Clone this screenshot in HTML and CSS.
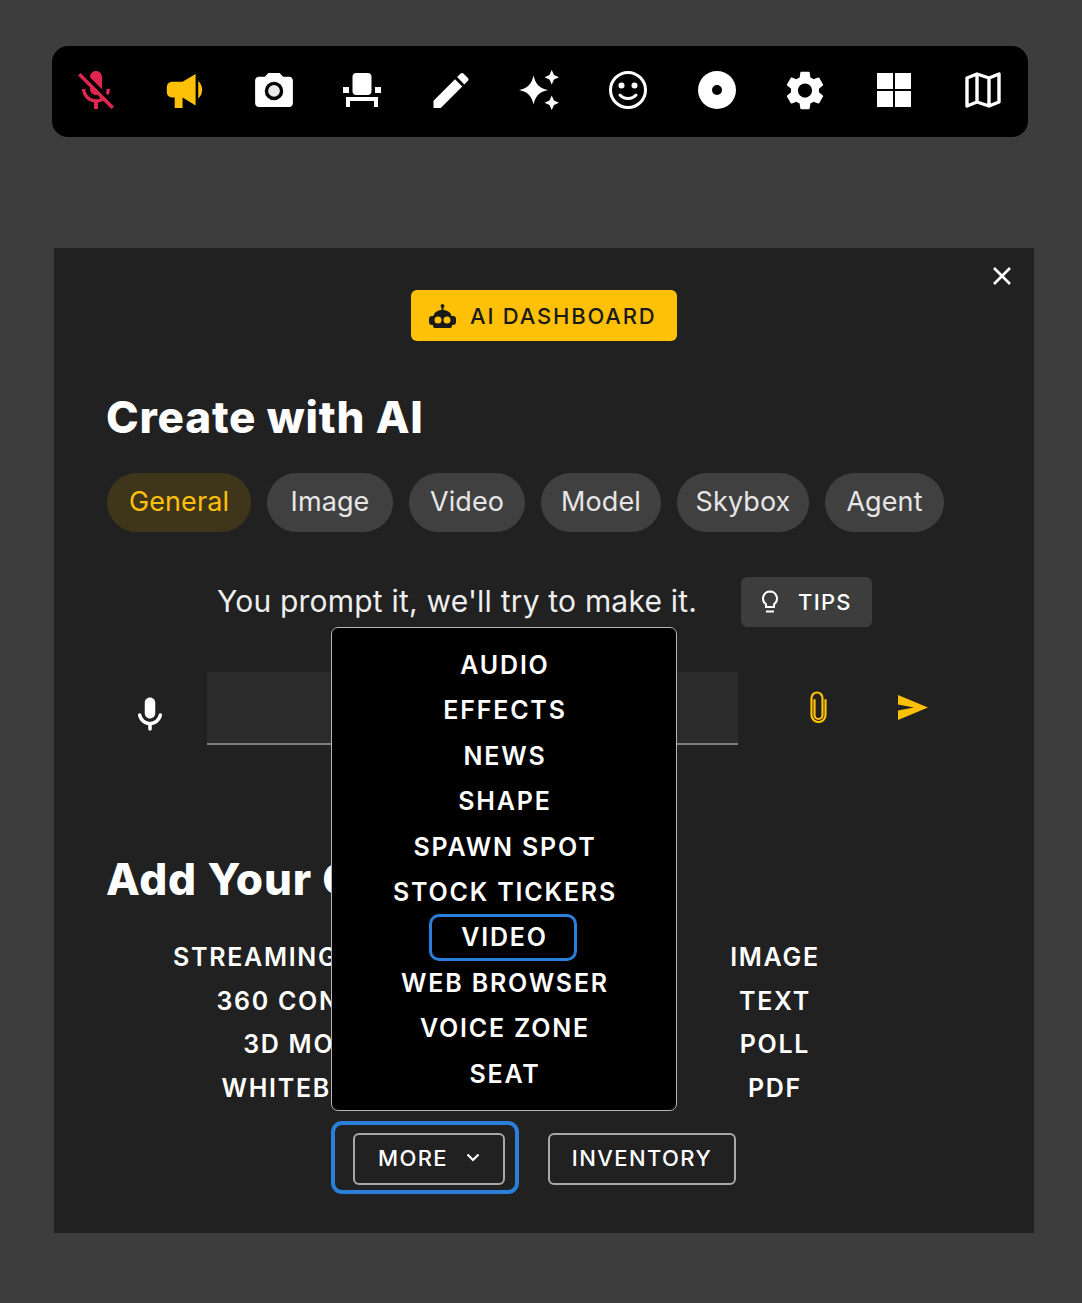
FILE: index.html
```html
<!DOCTYPE html>
<html lang="en">
<head>
<meta charset="utf-8">
<title>Create with AI</title>
<link rel="stylesheet" href="styles.css">
</head>
<body>
<nav class="toolbar">
  <button class="tool"><svg class="ic-mic-off" viewBox="3 2 18 19"><path fill="#e0264f" d="M19 11h-1.7c0 .74-.16 1.43-.43 2.05l1.23 1.23c.56-.98.9-2.09.9-3.28zm-4.02.17c0-.06.02-.11.02-.17V5c0-1.66-1.34-3-3-3S9 3.34 9 5v.18l5.98 5.99zM4.27 3L3 4.27l6.01 6.01V11c0 1.66 1.33 3 2.99 3 .22 0 .44-.03.65-.08l1.66 1.66c-.71.33-1.5.52-2.31.52-2.76 0-5.3-2.1-5.3-5.1H5c0 3.41 2.72 6.23 6 6.72V21h2v-3.28c.91-.13 1.77-.45 2.54-.9L19.73 21 21 19.73 4.27 3z"/></svg></button>
  <button class="tool"><svg class="ic-horn" viewBox="2 6 13.5 13"><path fill="#ffc107" d="M4 9c-1.1 0-2 .9-2 2v2c0 1.1.9 2 2 2h1v4h3v-4l5 3V6L8 9H4zm11.5 3c0-1.33-.58-2.53-1.5-3.35v6.69c.92-.81 1.5-2.01 1.5-3.34z"/></svg></button>
  <button class="tool"><svg class="ic-camera" viewBox="2 2 20 18"><path fill="#fff" d="M20 4h-3.17L15 2H9L7.17 4H4c-1.1 0-2 .9-2 2v12c0 1.1.9 2 2 2h16c1.1 0 2-.9 2-2V6c0-1.1-.9-2-2-2z"/><circle cx="12" cy="11.5" r="4.9" fill="#000"/><circle cx="12" cy="11.5" r="3.1" fill="#e8e8e8"/></svg></button>
  <button class="tool"><svg class="ic-chair" viewBox="0 0 38 34"><g fill="#fff"><rect x="9.500" y="0" width="19" height="22" rx="4"/><rect x="0" y="14" width="6" height="6"/><rect x="32" y="14" width="6" height="6"/><path d="M3 24h32v10h-4v-6H7v6H3z"/></g></svg></button>
  <button class="tool"><svg class="ic-pencil" viewBox="3 3 18 18"><path fill="#fff" d="M3 17.25V21h3.75L17.81 9.94l-3.75-3.75L3 17.25zM20.71 7.04c.39-.39.39-1.02 0-1.41l-2.34-2.34c-.39-.39-1.02-.39-1.41 0l-1.83 1.83 3.75 3.75 1.83-1.83z"/></svg></button>
  <button class="tool"><svg class="ic-spark" viewBox="1 1 22 22"><path fill="#fff" d="M19 9l1.25-2.75L23 5l-2.75-1.25L19 1l-1.25 2.75L15 5l2.75 1.25L19 9zm-10-5c.9 3.9 2.6 6.9 8 8-5.400 1.100-7.100 4.100-8 8-.9-3.900-2.600-6.900-8-8 5.400-1.100 7.100-4.100 8-8zM19 15l-1.250 2.750L15 19l2.750 1.250L19 23l1.250-2.750L23 19l-2.750-1.250L19 15z"/></svg></button>
  <button class="tool"><svg class="ic-smile" viewBox="0 0 38 38"><circle cx="19" cy="19" r="17.500" fill="none" stroke="#fff" stroke-width="3"/><circle cx="12.500" cy="14.500" r="3" fill="#fff"/><circle cx="25.500" cy="14.500" r="3" fill="#fff"/><path d="M11 24c4 4.500 12 4.500 16 0" fill="none" stroke="#fff" stroke-width="3" stroke-linecap="round"/></svg></button>
  <button class="tool"><svg class="ic-disc" viewBox="0 0 38 38"><circle cx="19" cy="19" r="19" fill="#fff"/><circle cx="19" cy="19" r="5" fill="#000"/></svg></button>
  <button class="tool"><svg class="ic-gear" viewBox="2.600 2 18.800 20"><path fill="#fff" d="M19.140 12.940c.04-.3.06-.61.06-.94 0-.32-.02-.64-.07-.94l2.030-1.580c.18-.14.23-.41.12-.61l-1.920-3.320c-.12-.22-.37-.29-.59-.22l-2.390.96c-.5-.38-1.030-.7-1.620-.94l-.36-2.540c-.04-.24-.24-.41-.48-.41h-3.840c-.24 0-.43.17-.47.41l-.36 2.540c-.59.24-1.130.57-1.620.94l-2.390-.96c-.22-.08-.47 0-.59.22L2.740 8.870c-.12.21-.08.47.12.61l2.030 1.580c-.05.3-.09.63-.09.94s.02.64.07.94l-2.030 1.580c-.18.14-.23.41-.12.61l1.920 3.320c.12.22.37.29.59.22l2.390-.96c.5.38 1.030.7 1.620.94l.36 2.540c.05.24.24.41.48.41h3.840c.24 0 .44-.17.47-.41l.36-2.540c.59-.24 1.130-.56 1.620-.94l2.390.96c.22.08.47 0 .59-.22l1.920-3.320c.12-.22.07-.47-.12-.61l-2.010-1.580zM12 15.600c-1.980 0-3.600-1.620-3.600-3.600s1.620-3.600 3.600-3.600 3.600 1.620 3.600 3.600-1.620 3.600-3.600 3.600z"/></svg></button>
  <button class="tool"><svg class="ic-grid" viewBox="0 0 34 34"><g fill="#fff"><rect width="16" height="16"/><rect x="18" width="16" height="16"/><rect y="18" width="16" height="16"/><rect x="18" y="18" width="16" height="16"/></g></svg></button>
  <button class="tool"><svg class="ic-map" viewBox="0 0 36 36"><path d="M2 6l10-4 12 4 10-4v28l-10 4-12-4-10 4zM12 2v28M24 6v28" fill="none" stroke="#fff" stroke-width="3.400" stroke-linejoin="round"/></svg></button>
</nav>

<main class="panel">
  <button class="close" aria-label="Close"><svg viewBox="0 0 20 20"><path d="M2 2l16 16M18 2L2 18" stroke="#fff" stroke-width="2.600"/></svg></button>

  <div class="dash-wrap">
    <button class="dash">
      <svg class="ic-robot" viewBox="0 0 27 24"><path fill="#1a1a1a" fill-rule="evenodd" d="M13.500 0a2 2 0 0 1 1 3.700V6c4.500.3 7.500 3 8 6h1.500a3 3 0 0 1 3 3v3a3 3 0 0 1-3 3h-1v1a2 2 0 0 1-2 2H6a2 2 0 0 1-2-2v-1H3a3 3 0 0 1-3-3v-3a3 3 0 0 1 3-3h1.500c.5-3 3.500-5.700 8-6V3.700a2 2 0 0 1 1-3.700zM9 12.500a3.500 3.500 0 1 0 0 7 3.500 3.500 0 0 0 0-7zm9 0a3.500 3.500 0 1 0 0 7 3.500 3.500 0 0 0 0-7z"/></svg>
      <span>AI DASHBOARD</span>
    </button>
  </div>

  <h1 class="heading h-create">Create with AI</h1>

  <div class="tabs">
    <span class="tab tab-on t1">General</span>
    <span class="tab t2">Image</span>
    <span class="tab t3">Video</span>
    <span class="tab t4">Model</span>
    <span class="tab t5">Skybox</span>
    <span class="tab t6">Agent</span>
  </div>

  <div class="prompt">
    <p class="prompt-text">You prompt it, we'll try to make it.</p>
    <button class="tips">
      <svg class="ic-bulb" viewBox="0 0 18 24"><path d="M9 1.500a7 7 0 0 0-4 12.700V17h8v-2.800A7 7 0 0 0 9 1.500z" fill="none" stroke="#fff" stroke-width="2"/><path d="M5 21.500h8" stroke="#fff" stroke-width="2"/></svg>
      <span>TIPS</span>
    </button>
  </div>

  <div class="input-row">
    <svg class="ic-mic" viewBox="4 2 16 19"><path fill="#fff" d="M12 14c1.660 0 3-1.340 3-3V5c0-1.660-1.340-3-3-3S9 3.340 9 5v6c0 1.660 1.340 3 3 3zM17.910 11c-.49 0-.9.36-.98.85C16.520 14.200 14.470 16 12 16s-4.520-1.800-4.930-4.150c-.08-.49-.49-.85-.98-.85-.61 0-1.090.54-1 1.140.49 3 2.890 5.350 5.910 5.780V20c0 .55.45 1 1 1s1-.45 1-1v-2.080c3.020-.43 5.420-2.780 5.910-5.780.1-.6-.39-1.140-1-1.140z"/></svg>
    <div class="field"></div>
    <svg class="ic-clip" viewBox="0 0 19 32"><path d="M5.500 9v15a4 4 0 0 0 8 0V7a5.500 5.500 0 0 0-11 0v17a7 7 0 0 0 14 0V9" fill="none" stroke="#ffc107" stroke-width="2.200" stroke-linecap="round"/></svg>
    <svg class="ic-send" viewBox="0 0 30 25"><path fill="#ffc107" d="M0 0l30 12.500L0 25v-9.500l16-3-16-3z"/></svg>
  </div>

  <h2 class="heading h-add">Add Your Content</h2>

  <div class="content-grid">
    <span>STREAMING SCREEN</span><span>IMAGE</span>
    <span>360 CONTENT</span><span>TEXT</span>
    <span>3D MODEL</span><span>POLL</span>
    <span>WHITEBOARD</span><span>PDF</span>
  </div>

  <div class="actions">
    <div class="focus-ring">
      <button class="outline-btn btn-more">MORE
        <svg class="ic-chev" viewBox="0 0 14 9"><path d="M1.500 1.500L7 7l5.500-5.500" fill="none" stroke="#fff" stroke-width="2.200"/></svg>
      </button>
    </div>
    <button class="outline-btn btn-inv">INVENTORY</button>
  </div>

  <ul class="menu">
    <li>AUDIO</li>
    <li>EFFECTS</li>
    <li>NEWS</li>
    <li>SHAPE</li>
    <li>SPAWN SPOT</li>
    <li>STOCK TICKERS</li>
    <li class="menu-active">VIDEO</li>
    <li>WEB BROWSER</li>
    <li>VOICE ZONE</li>
    <li>SEAT</li>
  </ul>
</main>
</body>
</html>
```

FILE: styles.css
```css
* { box-sizing: border-box; }
html, body { margin: 0; padding: 0; }
body {
  background: #3d3d3d;
  padding: 46px 0 0 52px;
  height: 1303px;
  overflow: hidden;
  font-family: "Inter", "Liberation Sans", sans-serif;
  color: #fff;
}
button { font: inherit; color: inherit; background: none; border: 0; padding: 0; }
svg { display: block; }

.toolbar {
  width: 976px;
  height: 91px;
  padding: 0 1px 3px 0;
  background: #000;
  border-radius: 16px;
  display: grid;
  grid-template-columns: repeat(11, 1fr);
  align-items: center;
  justify-items: center;
}
.tool { display: flex; align-items: center; justify-content: center; }
.ic-mic-off { width: 36px; height: 38px; }
.ic-horn { width: 37px; height: 34px; margin-top: 2px; }
.ic-camera { width: 38px; height: 34px; }
.ic-chair { width: 38px; height: 34px; }
.ic-pencil { width: 36px; height: 35px; }
.ic-spark { width: 42px; height: 40px; }
.ic-smile, .ic-disc { width: 38px; height: 38px; }
.ic-gear { width: 38px; height: 39px; }
.ic-grid { width: 34px; height: 34px; }
.ic-map { width: 36px; height: 36px; }

.panel {
  position: relative;
  width: 980px;
  height: 985px;
  margin: 111px 0 0 2px;
  padding: 42px 53px 0;
  background: #212121;
}
.close { position: absolute; top: 18px; right: 22px; width: 20px; height: 20px; }
.close svg { width: 20px; height: 20px; }

.dash-wrap { display: flex; padding-left: 304px; }
.dash {
  width: 266px;
  height: 51px;
  background: #ffc107;
  color: #1a1a1a;
  border-radius: 6px;
  display: flex;
  align-items: center;
  gap: 14px;
  padding-left: 18px;
  font-size: 22px;
  font-weight: 500;
  letter-spacing: 1.800px;
}
.ic-robot { width: 27px; height: 24px; }

.heading {
  margin: 0 0 0 -1px;
  height: 60px;
  line-height: 58px;
  font-size: 44px;
  font-weight: 800;
  letter-spacing: .8px;
  white-space: nowrap;
}
.h-create { margin-top: 47px; }
.h-add { margin-top: 105px; }

.tabs { display: flex; gap: 16px; margin-top: 25px; }
.tab {
  height: 59px;
  padding-bottom: 2px;
  border-radius: 30px;
  background: #404040;
  color: #e6e6e6;
  font-size: 27px;
  letter-spacing: .1px;
  display: flex;
  align-items: center;
  justify-content: center;
}
.tab-on { background: #3f351b; color: #ffc107; }
.t1 { width: 144px; }
.t2 { width: 126px; }
.t3 { width: 116px; }
.t4 { width: 120px; }
.t5 { width: 132px; }
.t6 { width: 119px; }

.prompt { display: flex; align-items: center; margin-top: 45px; padding-left: 110px; height: 50px; }
.prompt-text { margin: 0 0 2px; width: 524px; font-size: 30px; color: #eee; letter-spacing: .2px; white-space: nowrap; }
.tips {
  width: 131px;
  height: 50px;
  border-radius: 6px;
  background: #3d3d3d;
  display: flex;
  align-items: center;
  gap: 19px;
  padding-left: 20px;
  font-size: 22px;
  font-weight: 500;
  letter-spacing: 1.300px;
}
.ic-bulb { width: 18px; height: 24px; }

.input-row { display: flex; align-items: center; margin-top: 45px; height: 73px; position: relative; }
.ic-mic { width: 28px; height: 36px; margin: 10px 43px 0 29px; }
.field { width: 531px; height: 73px; background: #2b2b2b; border-bottom: 2px solid #7d7d7d; }
.ic-clip { width: 19px; height: 32px; margin: 0 0 3px 71px; }
.ic-send { width: 30px; height: 25px; margin: 0 0 2px 70px; }

.content-grid {
  display: grid;
  grid-template-columns: 416px 504px;
  justify-content: start;
  margin-top: 25px;
  grid-auto-rows: 43.800px;
  align-items: center;
  justify-items: center;
  font-size: 25px;
  font-weight: 600;
  letter-spacing: 1.700px;
  white-space: nowrap;
}
.content-grid span { width: 0; display: flex; justify-content: center; }

.actions { display: flex; align-items: center; margin: 11px 0 0 224px; gap: 29px; }
.focus-ring {
  width: 188px;
  height: 73px;
  border: 4px solid #2a80d8;
  border-radius: 11px;
  display: flex;
  align-items: center;
  justify-content: center;
  padding-top: 2px;
}
.outline-btn {
  height: 52px;
  padding-bottom: 2px;
  border: 2px solid #a8a8a8;
  border-radius: 6px;
  display: flex;
  align-items: center;
  justify-content: center;
  font-size: 22px;
  font-weight: 500;
  letter-spacing: 1.400px;
}
.btn-more { width: 152px; gap: 18px; margin-left: 8px; }
.btn-inv { width: 188px; margin-top: 3px; }
.ic-chev { width: 14px; height: 9px; }

.menu {
  position: absolute;
  top: 379px;
  left: 277px;
  width: 346px;
  height: 484px;
  margin: 0;
  padding: 15px 0 14px 2px;
  list-style: none;
  background: #000;
  border: 1px solid #b5b5b5;
  border-radius: 7px;
  font-size: 25px;
  font-weight: 600;
  letter-spacing: 1.800px;
  text-align: center;
}
.menu li { height: 45.400px; line-height: 45.400px; white-space: nowrap; }
.menu .menu-active {
  width: 148px;
  height: 46.400px;
  margin: -1px 0 0 95px;
  padding-left: 3px;
  line-height: 47.400px;
  outline: 3px solid #2a80d8;
  outline-offset: -3px;
  border-radius: 10px;
}
```
